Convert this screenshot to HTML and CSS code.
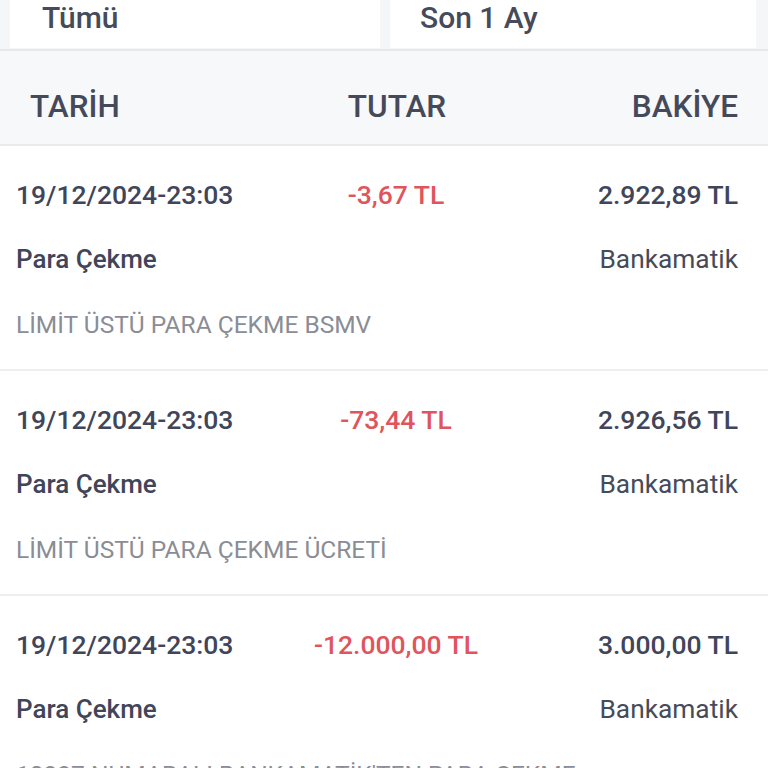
FILE: index.html
```html
<!DOCTYPE html>
<html lang="tr">
<head>
<meta charset="utf-8">
<link rel="stylesheet" href="styles.css">
</head>
<body>
<div class="filters">
  <div class="filter filter-left">Tümü</div>
  <div class="filter filter-right">Son 1 Ay</div>
</div>
<div class="thead">
  <div class="th th-date">TARİH</div>
  <div class="th th-amount">TUTAR</div>
  <div class="th th-balance">BAKİYE</div>
</div>
<div class="list">
  <div class="row">
    <div class="date">19/12/2024-23:03</div>
    <div class="amount">-3,67 TL</div>
    <div class="balance">2.922,89 TL</div>
    <div class="type">Para Çekme</div>
    <div class="channel">Bankamatik</div>
    <div class="desc">LİMİT ÜSTÜ PARA ÇEKME BSMV</div>
  </div>
  <div class="row">
    <div class="date">19/12/2024-23:03</div>
    <div class="amount">-73,44 TL</div>
    <div class="balance">2.926,56 TL</div>
    <div class="type">Para Çekme</div>
    <div class="channel">Bankamatik</div>
    <div class="desc">LİMİT ÜSTÜ PARA ÇEKME ÜCRETİ</div>
  </div>
  <div class="row">
    <div class="date">19/12/2024-23:03</div>
    <div class="amount">-12.000,00 TL</div>
    <div class="balance">3.000,00 TL</div>
    <div class="type">Para Çekme</div>
    <div class="channel">Bankamatik</div>
    <div class="desc">10337 NUMARALI BANKAMATİK'TEN PARA ÇEKME</div>
  </div>
</div>
</body>
</html>
```
FILE: styles.css
```css
html, body {
  margin: 0;
  padding: 0;
  background: #ffffff;
  font-family: Roboto, "Noto Sans", sans-serif;
  color: #434857;
  overflow: hidden;
  height: 768px;
}
.filters {
  display: grid;
  grid-template-columns: 370px 366px;
  column-gap: 10px;
  padding: 0 12px 0 10px;
  height: 51px;
  background: #f5f6f8;
  border-bottom: 2px solid #e6e8eb;
  box-sizing: border-box;
}
.filter {
  background: #ffffff;
  height: 48px;
  font-size: 30px;
  font-weight: 500;
  line-height: 36px;
  color: #464b5a;
}
.filter-left { padding-left: 32px; }
.filter-right { padding-left: 30px; }
.thead {
  display: grid;
  grid-template-columns: 288px 192px 1fr;
  align-items: center;
  height: 95px;
  padding: 0 30px 0 30px;
  background: #f7f8fa;
  border-bottom: 2px solid #e9eaed;
  box-sizing: border-box;
  font-size: 31.5px;
  font-weight: 500;
  color: #454a5b;
}
.th-date { padding-top: 18px; }
.th-amount { text-align: center; padding-top: 18px; margin-left: -34px; }
.th-balance { text-align: right; padding-top: 18px; }
.row {
  display: grid;
  grid-template-columns: 284px 192px 1fr;
  grid-template-rows: 40px 40px 40px;
  row-gap: 25px;
  align-items: center;
  padding: 28px 30px 25px 16px;
  border-bottom: 2px solid #eceef0;
}
.date {
  font-size: 26.5px;
  font-weight: 500;
  color: #40455a;
}
.amount {
  font-size: 26.5px;
  font-weight: 500;
  color: #e0545c;
  text-align: center;
}
.balance {
  font-size: 26.5px;
  font-weight: 500;
  color: #40455a;
  text-align: right;
}
.type {
  grid-column: 1 / 3;
  font-size: 26px;
  font-weight: 500;
  color: #40455a;
}
.channel {
  font-size: 26.3px;
  font-weight: 400;
  color: #464b5a;
  text-align: right;
}
.desc {
  grid-column: 1 / 4;
  font-size: 24.5px;
  font-weight: 400;
  color: #8a8d95;
  white-space: nowrap;
}
```
